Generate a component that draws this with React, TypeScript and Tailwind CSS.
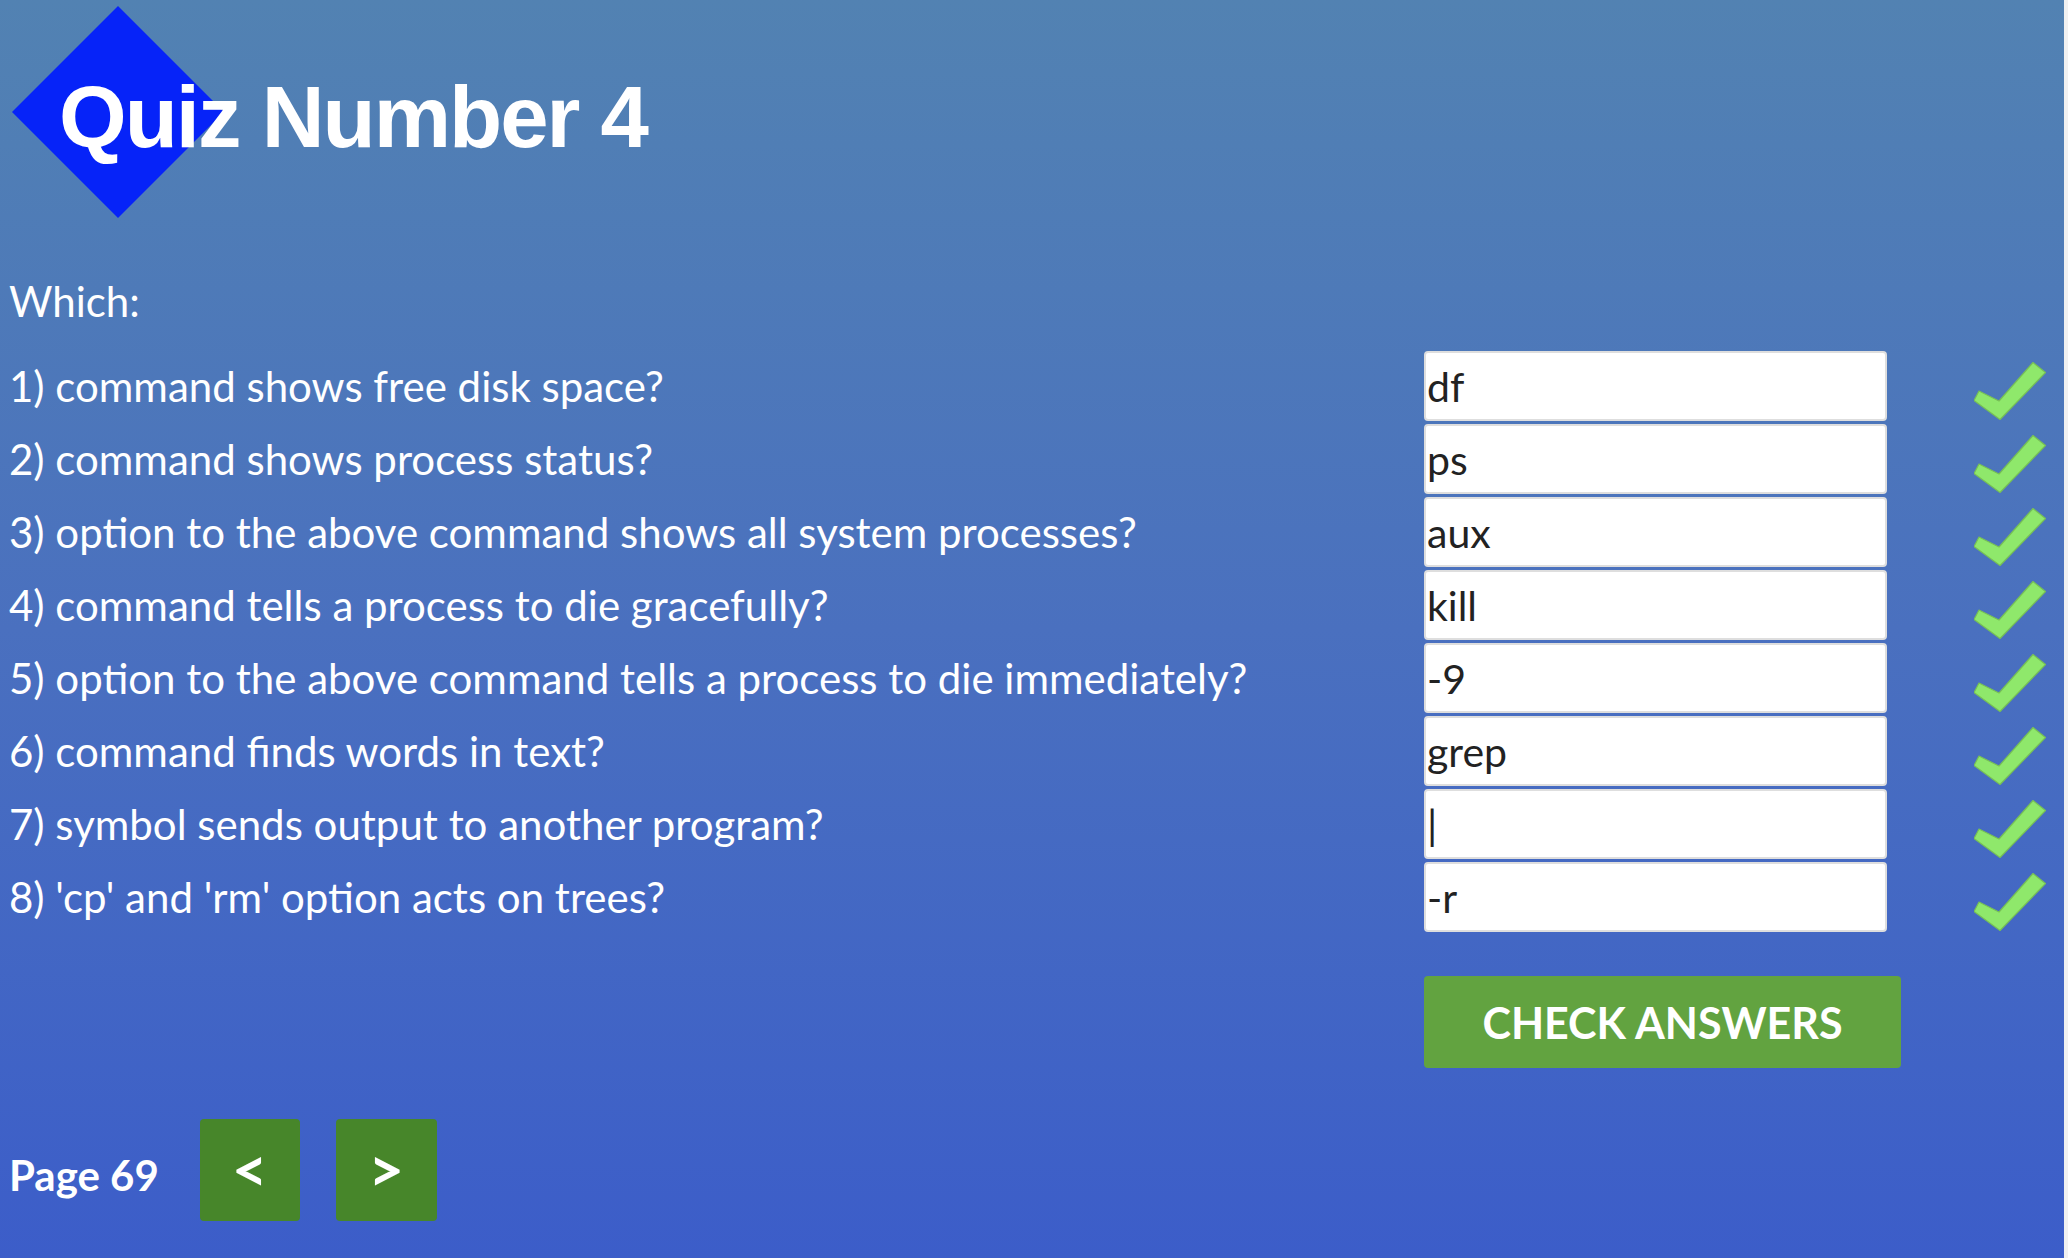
import React from "react";

const questions: { q: string; a: string }[] = [
  { q: "1) command shows free disk space?", a: "df" },
  { q: "2) command shows process status?", a: "ps" },
  { q: "3) option to the above command shows all system processes?", a: "aux" },
  { q: "4) command tells a process to die gracefully?", a: "kill" },
  { q: "5) option to the above command tells a process to die immediately?", a: "-9" },
  { q: "6) command finds words in text?", a: "grep" },
  { q: "7) symbol sends output to another program?", a: "|" },
  { q: "8) 'cp' and 'rm' option acts on trees?", a: "-r" },
];

function Check() {
  return (
    <svg width="72" height="58" viewBox="0 0 72 58" className="block">
      <polygon
        points="5,29 0,38.5 26,57.5 71.5,10.5 59,0.5 25,39"
        fill="#8fe86b"
        stroke="#77c055"
        strokeWidth="1.2"
        strokeLinejoin="round"
      />
    </svg>
  );
}

export default function App() {
  return (
    <div
      className="flex min-h-screen w-full"
      style={{ fontFamily: "Lato, 'Noto Sans', sans-serif" }}
    >
      <main className="flex-1 bg-gradient-to-b from-[#5282b2] via-[#4a70bf] to-[#3c5dc9] text-white">
        <header className="relative h-[277px]">
          <svg
            width="212"
            height="212"
            viewBox="0 0 212 212"
            className="absolute left-[12px] top-[6px]"
          >
            <polygon points="106,0 212,106 106,212 0,106" fill="#0623f8" />
          </svg>
          <h1
            className="relative pl-[59px] pt-[73px] text-[87px] font-bold leading-none tracking-[-2px] text-white"
            style={{ fontFamily: "'Liberation Sans', Arial, sans-serif" }}
          >
            Quiz Number 4
          </h1>
        </header>

        <div className="pl-[9px] text-[42px] leading-[48px]">Which:</div>

        <div className="mt-[26px] flex flex-col gap-[3px]">
          {questions.map((item) => (
            <div
              key={item.q}
              className="grid h-[70px] grid-cols-[1424px_463px_1fr] items-center"
            >
              <div className="pl-[9px] text-[42px] leading-[48px] whitespace-nowrap">
                {item.q}
              </div>
              <input
                readOnly
                value={item.a}
                className="h-[70px] w-[463px] rounded-[4px] border-2 border-[#dedede] bg-white px-[1px] text-[41px] leading-[48px] text-[#222222] outline-none"
              />
              <div className="self-end pb-[1px] pl-[87px]">
                <Check />
              </div>
            </div>
          ))}
        </div>

        <div className="mt-[44px] pl-[1424px]">
          <button className="flex h-[92px] w-[477px] items-center justify-center rounded-[4px] bg-[#62a340] text-[43px] font-bold leading-none text-white">
            CHECK ANSWERS
          </button>
        </div>

        <div className="mt-[51px] flex items-center pb-[37px] pl-[9px]">
          <span className="mt-[10px] text-[42px] font-bold leading-none">Page 69</span>
          <button className="ml-[41px] flex h-[102px] w-[100px] items-center justify-center rounded-[4px] bg-[#47862a] pb-[4px] text-[62px] font-bold leading-none text-white">
            &lt;
          </button>
          <button className="ml-[36px] flex h-[102px] w-[101px] items-center justify-center rounded-[4px] bg-[#47862a] pb-[4px] text-[62px] font-bold leading-none text-white">
            &gt;
          </button>
        </div>
      </main>
      <aside className="w-[4px] bg-[#f1f1f1]" />
    </div>
  );
}
